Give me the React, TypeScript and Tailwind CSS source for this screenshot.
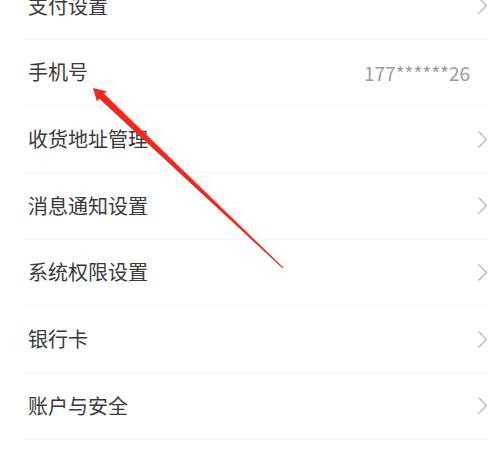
import React from "react";

const rows: { label: string; value?: string; chevron: boolean }[] = [
  { label: "支付设置", chevron: true },
  { label: "手机号", value: "177******26", chevron: false },
  { label: "收货地址管理", chevron: true },
  { label: "消息通知设置", chevron: true },
  { label: "系统权限设置", chevron: true },
  { label: "银行卡", chevron: true },
  { label: "账户与安全", chevron: true },
  { label: "清除缓存", value: "12.5MB", chevron: true },
];

function Chevron() {
  return (
    <svg width="11" height="19" viewBox="0 0 11 19" className="shrink-0">
      <polyline points="1.5,1.5 9.5,9.5 1.5,17.5" fill="none" stroke="#b8b8b8" strokeWidth="1.3" strokeLinejoin="miter" />
    </svg>
  );
}

export default function App() {
  return (
    <div
      className="relative w-[498px] h-[462px] overflow-hidden bg-white"
      style={{ fontFamily: '"Noto Sans CJK SC", "Noto Sans", sans-serif' }}
    >
      <div className="-mt-[27px] flex flex-col">
        {rows.map((r) => (
          <div
            key={r.label}
            className="ml-[24px] mr-[9px] h-[66.67px] shrink-0 flex items-center justify-between border-b border-[#f7f7f7] pl-[4px] pr-[1px]"
          >
            <span className="text-[20px] leading-none text-[#3a3a3a]">{r.label}</span>
            <div className="flex items-center gap-[10px]">
              {r.value && (
                <span className={`text-[19px] leading-none text-[#9c9c9c] ${r.chevron ? "" : "mr-[18px]"}`}>
                  {r.value}
                </span>
              )}
              {r.chevron && <Chevron />}
            </div>
          </div>
        ))}
      </div>
      <svg className="absolute inset-0 pointer-events-none" width="498" height="462" viewBox="0 0 498 462">
        <polygon
          points="93,88 106.5,91.2 104.1,93.8 283.3,267.6 282.7,268.4 99.3,98.8 96.9,101.4"
          fill="#f5261b"
        />
      </svg>
    </div>
  );
}
